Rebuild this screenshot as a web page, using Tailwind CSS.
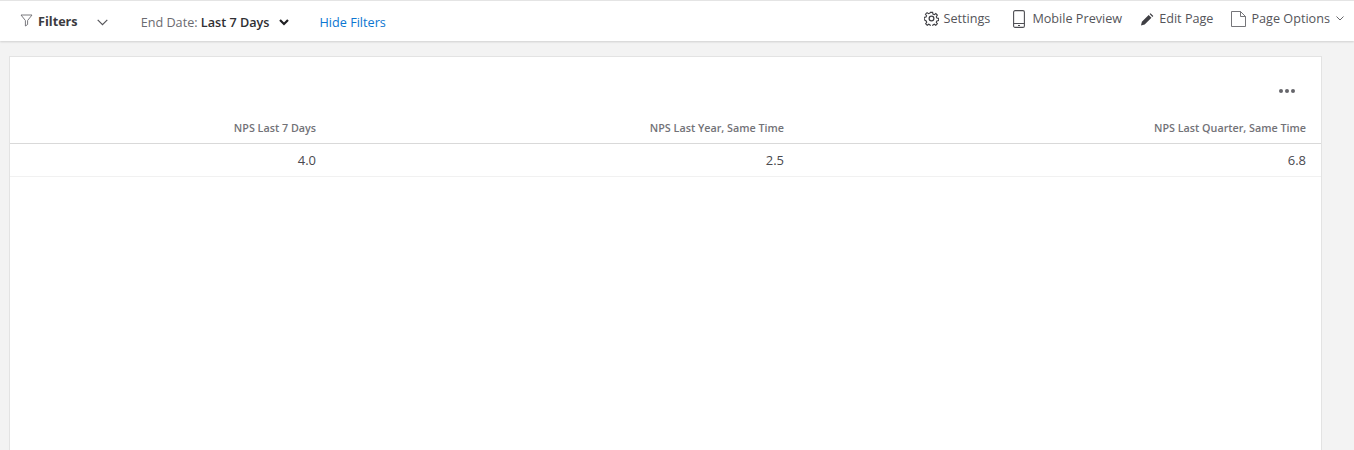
<!DOCTYPE html>
<html lang="en">
  <head>
    <meta charset="utf-8"/>
    <title>Dashboard</title>
    <script src="https://cdn.jsdelivr.net/npm/@tailwindcss/browser@4"></script>
  </head>
  <body class="bg-[#f3f3f3] h-[450px] overflow-hidden font-['Open_Sans',sans-serif] text-[#525256]">
    <!-- Toolbar -->
    <header class="h-[41px] bg-white border-t border-[#e4e4e4] shadow-[0_1px_2px_rgba(0,0,0,0.15)] flex justify-between text-[12.65px]">
      <div class="flex items-start pl-[20px]">
        <svg class="mt-[13px] w-[13px] h-[13px]" viewBox="0 0 13 13" fill="none" stroke="#6b6b70" stroke-width="0.9"><path d="M1 1h11L7.6 6.5V10.500L5.400 12V6.500z"/></svg>
        <span class="ml-[5px] mt-[11px] font-bold text-[#3b3b40] leading-[18px]">Filters</span>
        <svg class="ml-[19px] mt-[18px] w-[11px] h-[7px]" viewBox="0 0 11 7" fill="none" stroke="#55555a" stroke-width="1.200"><path d="M0.700 0.800L5.500 5.600L10.300 0.800"/></svg>
        <span class="ml-[33px] mt-[12px] leading-[18px] text-[#6b6b70]">End Date: <b class="font-semibold text-[#2f2f33]">Last 7 Days</b></span>
        <svg class="ml-[9px] mt-[18px] w-[10px] h-[7px]" viewBox="0 0 10 7" fill="none" stroke="#1f1f22" stroke-width="2.200"><path d="M1 1L5 5L9 1"/></svg>
        <a href="#" class="ml-[31px] mt-[12px] leading-[18px] text-[#0b76d1]">Hide Filters</a>
      </div>
      <nav class="flex items-start pr-[10px] text-[#55555a]">
        <svg class="mt-[10px] w-[15px] h-[15px]" viewBox="0 0 24 24" fill="none" stroke="#3f3f44" stroke-width="2"><circle cx="12" cy="12" r="3.800"/><path d="M10 1h4l.6 3.200 2.300 1 2.700-1.900 2.800 2.800-1.900 2.700 1 2.300 3.200.6v4l-3.200.6-1 2.300 1.900 2.700-2.800 2.800-2.700-1.900-2.300 1-.6 3.200h-4l-.6-3.200-2.300-1-2.700 1.900-2.800-2.800 1.900-2.700-1-2.300L-1 14v-4l3.200-.6 1-2.300L1.300 4.400l2.800-2.800 2.700 1.900 2.300-1z" transform="translate(1.200 1.200) scale(.9)"/></svg>
        <span class="ml-[5px] mt-[8px] leading-[18px]">Settings</span>
        <svg class="ml-[23px] mt-[9px] w-[12px] h-[18px]" viewBox="0 0 12 18" fill="none" stroke="#4f4f54" stroke-width="1.100"><rect x="0.600" y="0.600" width="10.800" height="16.800" rx="1.500"/><path d="M0.600 13.500h10.800M5 15.500h2"/></svg>
        <span class="ml-[7px] mt-[8px] leading-[18px]">Mobile Preview</span>
        <svg class="ml-[18px] mt-[12px] w-[14px] h-[13px]" viewBox="0 0 14 14" fill="#3f3f44"><path d="M0.500 13.500l1-4L8.800 2.200l3 3L4.500 12.500zM9.800 1.200l1-.9 3 3-.9 1z"/></svg>
        <span class="ml-[5px] mt-[8px] leading-[18px]">Edit Page</span>
        <svg class="ml-[18px] mt-[10px] w-[15px] h-[16px]" viewBox="0 0 15 16" fill="none" stroke="#66666b" stroke-width="0.900"><path d="M0.500 0.500H9.500L14.500 5.500V15.500H0.500zM9.500 0.500V5.500H14.500"/></svg>
        <span class="ml-[5px] mt-[8px] leading-[18px]">Page Options</span>
        <svg class="ml-[6px] mt-[15px] w-[8px] h-[5px]" viewBox="0 0 8 5" fill="none" stroke="#66666b" stroke-width="1"><path d="M0.500 0.500L4 4L7.500 0.500"/></svg>
      </nav>
    </header>

    <!-- Table card -->
    <main class="ml-[9px] mr-[32px] mt-[15px] h-[394px] bg-white border border-b-0 border-[#e3e3e3]">
      <div class="h-[33px] flex justify-end items-start pr-[26px] pt-[32px]">
        <div class="flex gap-[2px]">
          <span class="w-[4px] h-[4px] rounded-full bg-[#66666b]"></span>
          <span class="w-[4px] h-[4px] rounded-full bg-[#66666b]"></span>
          <span class="w-[4px] h-[4px] rounded-full bg-[#66666b]"></span>
        </div>
      </div>
      <div class="mt-[20px] grid grid-cols-[306px_468px_522px] text-right border-b border-[#d9d9d9] h-[34px] text-[10.75px] font-semibold text-[#727277] leading-[36px]">
        <div>NPS Last 7 Days</div>
        <div>NPS Last Year, Same Time</div>
        <div>NPS Last Quarter, Same Time</div>
      </div>
      <div class="grid grid-cols-[306px_468px_522px] text-right border-b border-[#f1f1f1] h-[33px] text-[13px] text-[#4a4a4f] leading-[33px]">
        <div>4.0</div>
        <div>2.5</div>
        <div>6.8</div>
      </div>
    </main>
  </body>
</html>
